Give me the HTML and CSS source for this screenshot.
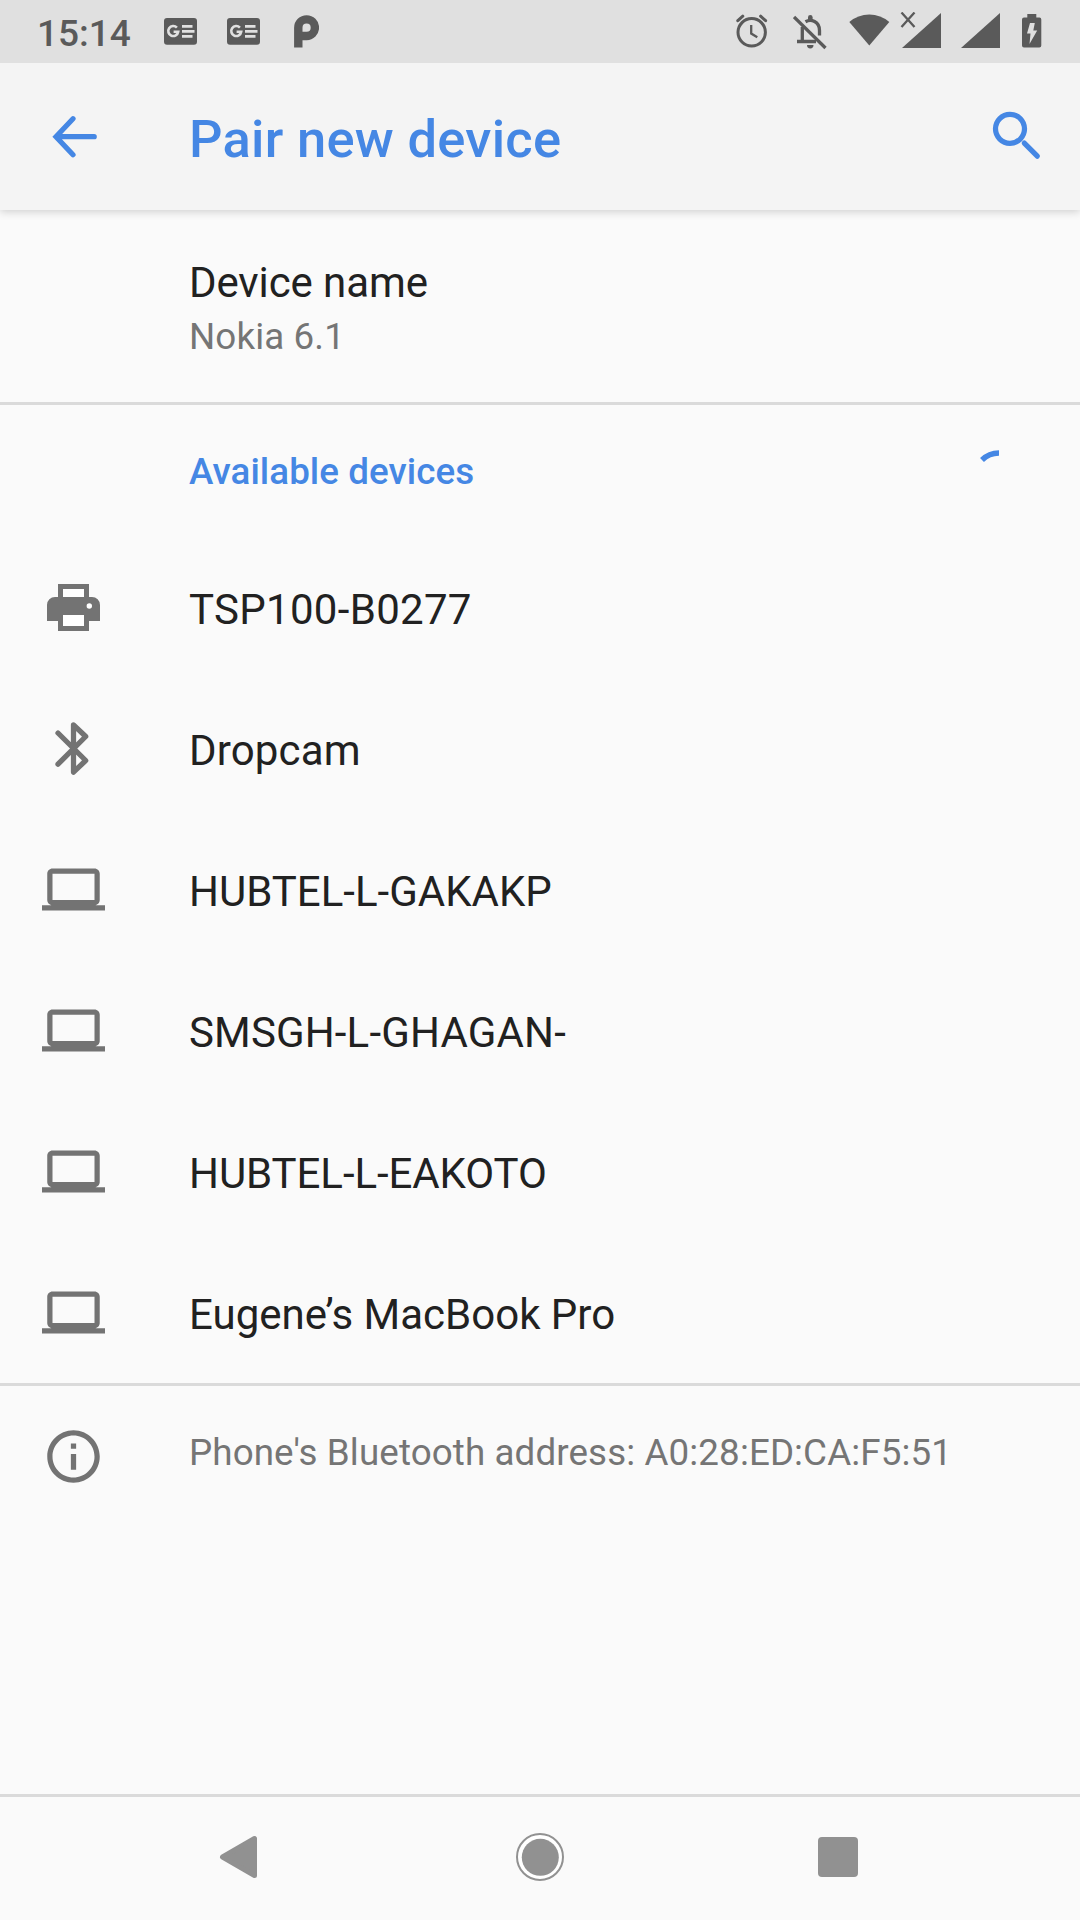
FILE: index.html
```html
<!DOCTYPE html>
<html lang="en">
<head>
<meta charset="utf-8">
<title>Pair new device</title>
<link rel="stylesheet" href="styles.css">
</head>
<body>
<svg class="defs" width="0" height="0" aria-hidden="true">
  <symbol id="news" viewBox="0 0 33 27">
    <rect width="33" height="26.7" rx="3" fill="currentColor"/>
    <path d="M12.900 9.600A5 5 0 1 0 14.200 13.800H9.600" fill="none" stroke="#e0e0e0" stroke-width="2.600"/>
    <path d="M18 8.400h10.500M18 13.400h12.500M18 18.400h10.500" stroke="#e0e0e0" stroke-width="2.600"/>
  </symbol>
  <symbol id="signal" viewBox="0 0 39 35">
    <path d="M39 0V35H0Z" fill="currentColor"/>
  </symbol>
  <symbol id="laptop" viewBox="0 0 24 24">
    <path fill="currentColor" d="M20 18c1.1 0 1.99-.9 1.99-2L22 6c0-1.100-.9-2-2-2H4c-1.100 0-2 .9-2 2v10c0 1.100.9 2 2 2H0v2h24v-2h-4zM4 6h16v10H4V6z"/>
  </symbol>
</svg>

<header class="status">
  <span class="clock">15:14</span>
  <div class="notifications">
    <svg class="news" width="33" height="27"><use href="#news"/></svg>
    <svg class="news" width="33" height="27"><use href="#news"/></svg>
    <svg class="p-app" width="25" height="33" viewBox="0 0 25 33">
      <path d="M4.300 32.500V12.700A8.300 8.300 0 1 1 12.600 21H5" fill="none" stroke="currentColor" stroke-width="8.400"/>
    </svg>
  </div>
  <div class="system">
    <svg class="alarm" width="32" height="34" viewBox="0 0 32 34" fill="none" stroke="currentColor" stroke-linecap="round">
      <circle cx="15.700" cy="18.300" r="13.700" stroke-width="3"/>
      <path d="M15.200 11V19.500L21.300 23.200" stroke-width="2.300" stroke-linecap="butt"/>
      <path d="M1.800 6.700L6.800 2.200M29.600 6.700L24.600 2.200" stroke-width="3"/>
    </svg>
    <svg class="bell" width="34" height="36" viewBox="0 0 34 36" fill="none" stroke="currentColor" stroke-width="3.300">
      <path d="M4 27.500H23M9.300 27.500V13"/>
      <path d="M12.500 7.800C18 4.600 26.500 7.500 26.500 16.500V21.500"/>
      <path d="M15 6V3.200A2.300 2.300 0 0 1 19.600 3.200V6Z" fill="currentColor" stroke="none"/>
      <path d="M1 3L32.500 34"/>
      <path d="M14 31H20.500A3.200 3.400 0 0 1 14 31Z" fill="currentColor" stroke="none"/>
    </svg>
    <svg class="wifi" width="41" height="32" viewBox="0 0 41 32">
      <path d="M20.300 31.500L.3 8Q9 .5 20.300 .5T40.300 8Z" fill="currentColor"/>
    </svg>
    <div class="sim">
      <svg width="39" height="35"><use href="#signal"/></svg>
      <svg class="no-data" width="16" height="16" viewBox="0 0 16 16">
        <path d="M1.500 .5L14.500 15M14.500 .5L1.500 15" stroke="currentColor" stroke-width="2.300"/>
      </svg>
    </div>
    <svg class="sim-two" width="39" height="35"><use href="#signal"/></svg>
    <svg class="battery" width="20" height="34" viewBox="0 0 20 34">
      <path d="M5.300 0H14.300V3.500H17.500A2 2 0 0 1 19.300 5.500V31.500A2 2 0 0 1 17.300 33.500H2A2 2 0 0 1 0 31.500V5.500A2 2 0 0 1 2 3.500H5.300Z" fill="currentColor"/>
      <path d="M8 9H12.800L11.300 16.500H15.200L7.500 30L8.500 19.500H5Z" fill="#e0e0e0"/>
    </svg>
  </div>
</header>

<div class="toolbar">
  <svg class="icon" viewBox="0 0 63 63" fill="none" stroke="currentColor" stroke-width="5.250" stroke-linecap="round">
    <path d="M31 13.700L14 31.700L31 49.700M15.500 31.700H52.200"/>
  </svg>
  <h1 class="title">Pair new device</h1>
  <svg class="icon" viewBox="0 0 63 63" fill="none" stroke="currentColor" stroke-width="5.250" stroke-linecap="round">
    <circle cx="26" cy="23.800" r="14.500"/>
    <path d="M40.300 38.100L53.300 51.200"/>
  </svg>
</div>

<main class="content">
  <section class="device">
    <div class="device-label">Device name</div>
    <div class="device-value">Nokia 6.1</div>
  </section>

  <section class="available">
    <div class="category">
      <h2 class="category-title">Available devices</h2>
      <svg class="spinner" viewBox="0 0 54 54" fill="none" stroke="currentColor" stroke-width="5.500">
        <path d="M10 10A24 24 0 0 1 27 3"/>
      </svg>
    </div>
    <ul class="list">
      <li class="row">
        <svg class="icon" viewBox="0 0 63 63">
          <path fill="#fff" d="M20 12H43V51H20Z"/>
          <path fill="currentColor" fill-rule="evenodd" d="M16 8H47V21H50A8 8 0 0 1 58 29V45H47V55H16V45H5V29A8 8 0 0 1 13 21H16ZM21 13V21H42V13ZM21 39V50H42V39Z"/>
          <circle cx="47.300" cy="30" r="2.700" fill="#fff"/>
        </svg>
        <span class="name name-numeric">TSP100-B0277</span>
      </li>
      <li class="row">
        <svg class="icon" viewBox="0 0 63 63" fill="none" stroke="currentColor" stroke-width="5.250" stroke-linecap="round" stroke-linejoin="round">
          <path d="M16 16L43.700 43.500L31.500 55.200V7.800L43.700 19.500L16 47.200"/>
        </svg>
        <span class="name name-loose">Dropcam</span>
      </li>
      <li class="row">
        <svg class="icon"><use href="#laptop"/></svg>
        <span class="name">HUBTEL-L-GAKAKP</span>
      </li>
      <li class="row">
        <svg class="icon"><use href="#laptop"/></svg>
        <span class="name name-loose">SMSGH-L-GHAGAN-</span>
      </li>
      <li class="row">
        <svg class="icon"><use href="#laptop"/></svg>
        <span class="name name-tight">HUBTEL-L-EAKOTO</span>
      </li>
      <li class="row">
        <svg class="icon"><use href="#laptop"/></svg>
        <span class="name">Eugene’s MacBook Pro</span>
      </li>
    </ul>
  </section>

  <footer class="address">
    <svg class="icon" viewBox="0 0 24 24" fill="currentColor">
      <path d="M11 17h2v-6h-2v6zm1-15C6.480 2 2 6.480 2 12s4.480 10 10 10 10-4.480 10-10S17.520 2 12 2zm0 18c-4.410 0-8-3.590-8-8s3.590-8 8-8 8 3.590 8 8-3.590 8-8 8zM11 9h2V7h-2v2z"/>
    </svg>
    <span class="address-text">Phone's Bluetooth address: A0:28:ED:CA:F5:51</span>
  </footer>
</main>

<nav class="navbar">
  <svg width="60" height="60" viewBox="0 0 60 60">
    <path d="M12.500 30L44.500 11.500V48.500Z" fill="currentColor" stroke="currentColor" stroke-width="5" stroke-linejoin="round"/>
  </svg>
  <svg width="60" height="60" viewBox="0 0 60 60">
    <circle cx="30" cy="30" r="23" fill="#fff" stroke="currentColor" stroke-width="2"/>
    <circle cx="30.300" cy="30.300" r="18.500" fill="currentColor"/>
  </svg>
  <svg width="60" height="60" viewBox="0 0 60 60">
    <rect x="8" y="10" width="40" height="40" rx="4" fill="currentColor"/>
  </svg>
</nav>
</body>
</html>
```
FILE: styles.css
```css
* {
  box-sizing: border-box;
}

body {
  margin: 0;
  width: 1080px;
  height: 1920px;
  display: flex;
  flex-direction: column;
  overflow: hidden;
  background: #fafafa;
  color: #212121;
  font-family: Roboto, sans-serif;
  font-size: 42px;
}

svg {
  display: block;
  flex: none;
}

.defs {
  position: absolute;
}

.status {
  position: relative;
  z-index: 1;
  display: flex;
  height: 63px;
  background: #e0e0e0;
  color: #5a5a5a;
}

.clock {
  width: 126px;
  padding-left: 37px;
  font-size: 37px;
  font-weight: 500;
  line-height: 68px;
}

.notifications {
  display: flex;
  align-items: flex-start;
  margin-left: 38px;
}

.news {
  margin: 18px 30px 0 0;
}

.p-app {
  margin: 15px 0 0 4px;
}

.system {
  display: flex;
  align-items: flex-start;
  margin-left: auto;
  padding-right: 38px;
}

.alarm {
  margin-top: 14px;
}

.bell {
  margin: 14px 0 0 25px;
}

.wifi {
  margin: 14px 0 0 22px;
}

.sim {
  position: relative;
  margin: 13px 0 0 12px;
}

.no-data {
  position: absolute;
  left: -2px;
  top: -1px;
}

.sim-two {
  margin: 13px 0 0 20px;
}

.battery {
  margin: 14px 0 0 22px;
}

.toolbar {
  position: relative;
  display: flex;
  align-items: center;
  height: 147px;
  padding: 0 33px 0 42px;
  background: #f4f4f4;
  color: #4587e4;
  box-shadow: 0 2px 8px rgba(0, 0, 0, 0.17);
}

.icon {
  width: 63px;
  height: 63px;
}

.title {
  flex: 1;
  margin: 4px 0 0 84px;
  font-size: 52.5px;
  font-weight: 500;
  line-height: 62px;
  letter-spacing: 0.28px;
}

.content {
  flex: 1;
}

.device {
  height: 195px;
  padding: 48px 0 0 189px;
  border-bottom: 3px solid #dadada;
}

.device-label {
  line-height: 50px;
  letter-spacing: -0.1px;
}

.device-value {
  margin-top: 5px;
  font-size: 36.75px;
  line-height: 48px;
  letter-spacing: 0.12px;
  color: #757575;
}

.available {
  border-bottom: 3px solid #dadada;
}

.category {
  display: flex;
  align-items: center;
  justify-content: space-between;
  height: 132px;
  padding: 0 54px 0 189px;
  color: #4587e4;
}

.category-title {
  margin: 2px 0 0;
  font-size: 36.75px;
  font-weight: 500;
  line-height: 44px;
  letter-spacing: 0.06px;
}

.spinner {
  width: 54px;
  height: 54px;
  margin-top: 12px;
}

.list {
  margin: 0;
  padding: 0;
  list-style: none;
}

.row {
  display: flex;
  align-items: center;
  gap: 84px;
  height: 141px;
  padding-left: 42px;
}

.row .icon,
.address .icon {
  color: #737373;
}

.name {
  padding-top: 4px;
  line-height: 50px;
}

.name-numeric {
  letter-spacing: 0.3px;
}

.name-loose {
  letter-spacing: 0.15px;
}

.name-tight {
  letter-spacing: -0.08px;
}

.address {
  display: flex;
  gap: 84px;
  padding: 39px 0 0 42px;
}

.address-text {
  padding-top: 4px;
  font-size: 36.75px;
  line-height: 48px;
  letter-spacing: 0.11px;
  color: #757575;
}

.navbar {
  display: flex;
  align-items: center;
  justify-content: center;
  gap: 240px;
  height: 126px;
  padding-bottom: 3px;
  border-top: 3px solid #dadada;
  color: #919191;
}
```
